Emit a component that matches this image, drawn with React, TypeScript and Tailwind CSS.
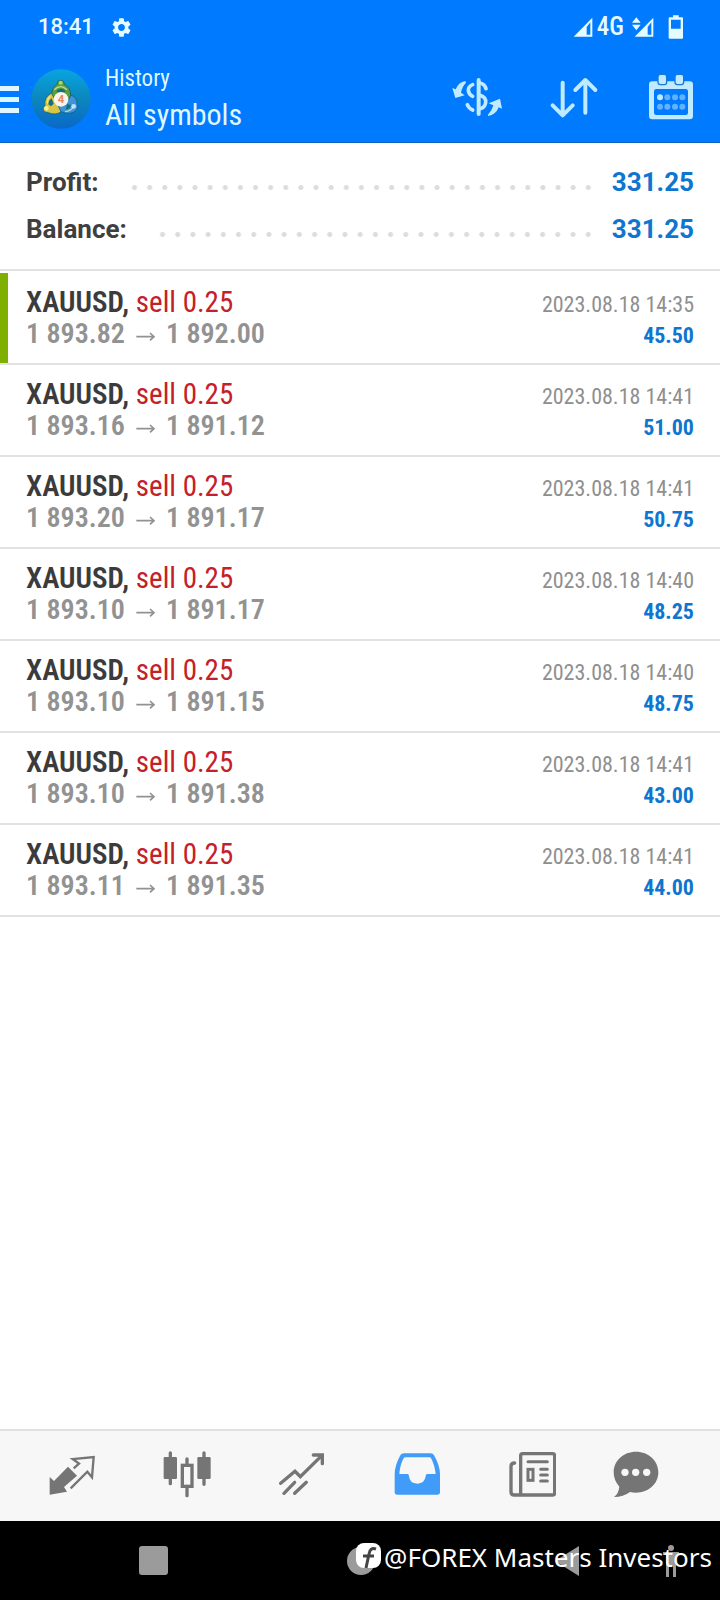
import React from "react";
import { MdSettings } from "react-icons/md";

interface Deal {
  open: string;
  close: string;
  time: string;
  profit: string;
}

const deals: Deal[] = [
  { open: "1 893.82", close: "1 892.00", time: "2023.08.18 14:35", profit: "45.50" },
  { open: "1 893.16", close: "1 891.12", time: "2023.08.18 14:41", profit: "51.00" },
  { open: "1 893.20", close: "1 891.17", time: "2023.08.18 14:41", profit: "50.75" },
  { open: "1 893.10", close: "1 891.17", time: "2023.08.18 14:40", profit: "48.25" },
  { open: "1 893.10", close: "1 891.15", time: "2023.08.18 14:40", profit: "48.75" },
  { open: "1 893.10", close: "1 891.38", time: "2023.08.18 14:41", profit: "43.00" },
  { open: "1 893.11", close: "1 891.35", time: "2023.08.18 14:41", profit: "44.00" },
];

const StatusBar: React.FC = () => (
  <div className="flex h-[54px] items-center justify-between pl-[38px] pr-9 text-[#e6fbff]">
    <div className="flex items-center gap-4">
      <span className="text-[22px] font-medium leading-8">18:41</span>
      <MdSettings size={23} />
    </div>
    <div className="flex items-center">
      <svg width="20" height="20" viewBox="0 0 60 60" fill="currentColor">
        <path fillRule="evenodd" d="M2 59L58 2V59ZM41 30V53H52V16Z" />
      </svg>
      <span className="ml-1 font-['Roboto_Condensed','Roboto',sans-serif] text-[25px] font-medium leading-8">
        4G
      </span>
      <svg className="ml-2" width="22" height="20" viewBox="0 0 66 60" fill="currentColor">
        <path fillRule="evenodd" d="M8 59L64 2V59ZM47 30V53H58V16Z" />
        <path d="M13 1L26 17H0ZM13 40L0 23H26Z" />
      </svg>
      <svg className="ml-[14px]" width="16" height="24" viewBox="0 0 48 72">
        <path
          fill="currentColor"
          fillRule="evenodd"
          d="M15 1H32V7H42Q45 7 45 10V68Q45 71 42 71H5Q2 71 2 68V10Q2 7 5 7H15ZM9 14V41H38V14Z"
        />
      </svg>
    </div>
  </div>
);

const Logo: React.FC = () => (
  <svg className="ml-3 shrink-0" width="60" height="60" viewBox="0 0 180 180">
    <defs>
      <linearGradient id="sky" x1="0" y1="0" x2="0" y2="1">
        <stop offset="0" stopColor="#08a5e0" />
        <stop offset="0.5" stopColor="#0c86bd" />
        <stop offset="1" stopColor="#0a68c8" />
      </linearGradient>
    </defs>
    <circle cx="90" cy="90" r="89" fill="url(#sky)" />
    <g stroke="#0b5770" strokeWidth="2">
      <path fill="#5c9f3c" d="M78 46Q78 34 89 34Q100 34 100 46Q119 55 119 79Q117 92 106 96L70 92Q60 86 62 72Q64 53 78 46Z" />
      <path fill="#d9c545" d="M62 72Q68 92 84 106L90 128Q76 139 55 132L40 128Q32 118 42 110Q38 84 62 72Z" />
      <path fill="#3f93d6" d="M120 78Q139 86 138 105Q144 114 135 124Q121 140 90 128L82 112Q108 106 120 78Z" />
    </g>
    <path fill="#14707c" d="M76 66Q90 52 104 66L98 72H82ZM52 106Q52 94 62 88L68 104L60 112ZM104 122Q118 120 120 108L108 106Z" />
    <circle cx="89" cy="41" r="6" fill="#a8d86a" />
    <circle cx="46" cy="118" r="7" fill="#f6ef8e" />
    <circle cx="128" cy="112" r="7" fill="#b9e2ff" />
    <path d="M70 62Q88 44 108 62M50 104Q48 90 58 82M102 128Q120 126 126 114" fill="none" stroke="#eaf7c8" strokeWidth="4" opacity="0.7" />
    <circle cx="90" cy="91" r="22" fill="#fbf4ea" />
    <text x="90" y="103" textAnchor="middle" fontSize="34" fontWeight="700" fill="#e8875a">
      4
    </text>
  </svg>
);

const Header: React.FC = () => (
  <header className="border-b border-[#0a63c4] bg-[#007aff]">
    <StatusBar />
    <div className="flex h-[88px] items-center justify-between pr-[26px] pt-[2px]">
      <div className="flex items-center">
        <button aria-label="Menu" className="flex w-[19px] flex-col gap-[6px]">
          <span className="h-[5px] bg-[#dff6ff]" />
          <span className="h-[5px] bg-[#dff6ff]" />
          <span className="h-[5px] bg-[#dff6ff]" />
        </button>
        <Logo />
        <div className="ml-[14px] font-['Roboto_Condensed','Roboto',sans-serif] text-[#dff8ff]">
          <p className="text-[23px] leading-8">History</p>
          <h1 className="text-[30px] leading-10">All symbols</h1>
        </div>
      </div>
      <div className="flex items-center gap-12 pb-1 text-[#c0eaff]">
        <button aria-label="Filter by symbol">
          <svg width="50" height="42" viewBox="0 0 150 126" fill="none" stroke="currentColor" strokeLinecap="round">
            <path fill="currentColor" stroke="none" d="M40 15Q20 18 11 40L1 36L10 66L38 58L27 50Q30 32 42 20Z" />
            <path fill="currentColor" stroke="none" d="M108 120Q132 116 140 94L150 98L144 68L110 82L124 88Q120 104 108 116Z" />
            <path strokeWidth="11" d="M62 26Q48 32 49 44Q51 56 62 61M84 21Q98 24 102 38M84 58Q103 64 101 80Q98 96 84 98M46 86Q50 97 62 102" />
            <path strokeWidth="12" d="M80 12V114" />
          </svg>
        </button>
        <button aria-label="Sort">
          <svg width="50" height="42" viewBox="0 0 150 126" fill="none" stroke="currentColor" strokeWidth="12" strokeLinecap="round" strokeLinejoin="round">
            <path d="M38 20V118M8 88L38 118L68 88" />
            <path d="M106 110V12M76 42L106 12L136 42" />
          </svg>
        </button>
        <button aria-label="Select period">
          <svg width="46" height="48" viewBox="0 0 138 144" fill="currentColor">
            <path fillRule="evenodd" d="M13 25H125Q135 25 135 35V129Q135 139 125 139H13Q3 139 3 129V35Q3 25 13 25ZM25 48Q18 48 18 55V119Q18 126 25 126H113Q120 126 120 119V55Q120 48 113 48Z" />
            <g stroke="#1a78d8" strokeWidth="4">
              <rect x="30" y="4" width="26" height="31" rx="7" />
              <rect x="81" y="4" width="26" height="31" rx="7" />
            </g>
            <circle cx="36" cy="73" r="9" />
            <g opacity="0.5">
              <circle cx="58" cy="73" r="9" />
              <circle cx="81" cy="73" r="9" />
              <circle cx="103" cy="73" r="9" />
              <circle cx="36" cy="101" r="9" />
              <circle cx="58" cy="101" r="9" />
              <circle cx="81" cy="101" r="9" />
              <circle cx="103" cy="101" r="9" />
            </g>
          </svg>
        </button>
      </div>
    </div>
  </header>
);

interface SummaryRowProps {
  label: string;
  value: string;
}

const SummaryRow: React.FC<SummaryRowProps> = ({ label, value }) => (
  <div className="flex h-[47px] items-center text-[26px] leading-8">
    <dt className="font-bold text-[#3f3f3f]">{label}</dt>
    {/* Dotted leader */}
    <span className="ml-7 mr-4 mt-3 h-[15px] flex-1 bg-[radial-gradient(circle,#dcdcdc_2px,transparent_3px)] bg-[length:15px_15px] bg-repeat-space" />
    <dd className="font-bold text-[#0f76d0]">{value}</dd>
  </div>
);

interface DealRowProps {
  deal: Deal;
  active: boolean;
}

const DealRow: React.FC<DealRowProps> = ({ deal, active }) => (
  <li className="flex border-b-2 border-[#e2e2e2]">
    <div className={`w-2 shrink-0 ${active ? "bg-[#7fb000]" : ""}`} />
    <div className="flex-1 py-[13px] pl-[18px] pr-[26px] font-['Roboto_Condensed','Roboto',sans-serif]">
      <div className="flex h-8 items-baseline justify-between">
        <span className="text-[29px] font-semibold leading-8 text-[#3b3b3b]">
          XAUUSD, <span className="font-normal text-[#c4202a]">sell 0.25</span>
        </span>
        <time className="text-[22px] leading-8 text-[#8f8f8f]">{deal.time}</time>
      </div>
      <div className="flex h-8 items-baseline justify-between">
        <span className="flex items-baseline text-[28px] font-semibold leading-8 text-[#929292]">
          {deal.open}
          <svg className="mx-[11px]" width="19" height="13" viewBox="0 0 57 39" fill="none" stroke="currentColor" strokeWidth="5">
            <path d="M1 20H54M42 9L54 20L42 31" />
          </svg>
          {deal.close}
        </span>
        <span className="text-[22px] font-bold leading-8 text-[#0f76d0]">{deal.profit}</span>
      </div>
    </div>
  </li>
);

const TabBar: React.FC = () => (
  <nav className="grid h-[92px] grid-cols-[repeat(5,1fr)_92px] items-center justify-items-center border-t-2 border-[#e0e0e0] bg-[#f7f7f7] pb-[2px] pl-[14px] pr-[38px] text-[#757575]">
    <button aria-label="Quotes">
      <svg width="48" height="48" viewBox="0 0 144 144">
        <path fill="currentColor" d="M60 47L87 74L48 108L57 122L5 131V78L18 90Z" />
        <path fill="none" stroke="currentColor" strokeWidth="7" d="M77 52L93 38L74 24L137 18L132 79L118 62L68 112" />
      </svg>
    </button>
    <button aria-label="Charts">
      <svg width="48" height="48" viewBox="0 0 144 144" fill="none" stroke="currentColor" strokeLinecap="round">
        <rect x="2" y="18" width="40" height="66" rx="4" fill="currentColor" stroke="none" />
        <rect x="103" y="18" width="40" height="66" rx="4" fill="currentColor" stroke="none" />
        <rect x="58" y="43" width="29" height="63" strokeWidth="10" />
        <path strokeWidth="10" d="M22 6V98M123 6V100M72 24V38M72 112V134" />
      </svg>
    </button>
    <button aria-label="Trade">
      <svg width="48" height="48" viewBox="0 0 144 144" fill="none" stroke="currentColor" strokeWidth="10" strokeLinecap="round">
        <path d="M8 97L51 61L67 77L132 13M106 12H133V38M18 127L50 94M50 127L85 94" />
      </svg>
    </button>
    <button aria-label="History" className="text-[#419bf9]">
      <svg width="48" height="48" viewBox="0 0 144 144" fill="currentColor">
        <path
          fillRule="evenodd"
          d="M33 7H113Q120 7 123 13Q141 44 141 70V123Q141 131 133 131H13Q5 131 5 123V70Q5 44 22 13Q25 7 33 7ZM37 19Q33 19 31 23Q21 42 19 69H43Q48 69 48 76Q50 98 73 98Q95 98 98 76Q98 69 103 69H128Q125 42 115 23Q113 19 109 19Z"
        />
      </svg>
    </button>
    <button aria-label="News">
      <svg width="48" height="48" viewBox="0 0 144 144" fill="none" stroke="currentColor" strokeWidth="10" strokeLinecap="round">
        <rect x="38" y="8" width="102" height="124" rx="6" />
        <path d="M20 36Q9 36 9 46V122Q9 132 19 132H38" />
        <rect x="60" y="55" width="15" height="33" strokeWidth="9" />
        <path strokeWidth="9" d="M60 32H118M98 55H118M98 72H118M98 90H118" />
      </svg>
    </button>
    <button aria-label="Messages">
      <svg width="48" height="48" viewBox="0 0 144 144">
        <path fill="currentColor" d="M72 2C110 2 139 29 139 64C139 99 110 125 72 125Q62 125 54 123Q34 138 6 138Q20 128 22 107Q5 88 5 64C5 29 34 2 72 2Z" />
        <g fill="#f7f7f7">
          <circle cx="39" cy="64" r="11" />
          <circle cx="71" cy="64" r="11" />
          <circle cx="104" cy="64" r="11" />
        </g>
      </svg>
    </button>
  </nav>
);

const SystemNav: React.FC = () => (
  <footer className="relative flex h-[79px] items-center justify-between bg-black pl-[139px] pr-9 text-[#9b9b9b]">
    <button aria-label="Recent apps" className="size-[29px] rounded-[3px] bg-[#9b9b9b]" />
    <button aria-label="Home" className="size-[28px] rounded-full bg-[#9b9b9b]" />
    <div className="flex items-center gap-[77px]">
      <button aria-label="Back">
        <svg width="28" height="32" viewBox="0 0 28 32" fill="currentColor">
          <path d="M2 16L26 1V31Z" />
        </svg>
      </button>
      <button aria-label="Accessibility">
        <svg width="26" height="34" viewBox="0 0 26 34" fill="currentColor">
          <circle cx="13" cy="4" r="3" />
          <path d="M5 8H21V11H18V33H15V21H11V33H8V11H5Z" />
        </svg>
      </button>
    </div>
    {/* Watermark */}
    <div className="absolute right-2 top-[18px] flex items-center gap-[2px] text-white">
      <svg width="26" height="28" viewBox="0 0 26 28">
        <rect width="25" height="25" rx="8" fill="#fff" />
        <path d="M20 6Q14 4 13 11L10 25M7 13H18" fill="none" stroke="#444" strokeWidth="3" />
      </svg>
      <span className="whitespace-nowrap font-['Noto_Sans',sans-serif] text-[26px] leading-9">
        @FOREX Masters Investors
      </span>
    </div>
  </footer>
);

export default function App() {
  return (
    <div className="flex min-h-screen flex-col bg-white font-['Roboto',sans-serif]">
      <Header />
      <main className="flex-1">
        <dl className="border-b-2 border-[#e2e2e2] px-[26px] pb-[17px] pt-[15px]">
          <SummaryRow label="Profit:" value="331.25" />
          <SummaryRow label="Balance:" value="331.25" />
        </dl>
        <ul className="pt-[2px]">
          {deals.map((deal, index) => (
            <DealRow key={index} deal={deal} active={index === 0} />
          ))}
        </ul>
      </main>
      <TabBar />
      <SystemNav />
    </div>
  );
}
